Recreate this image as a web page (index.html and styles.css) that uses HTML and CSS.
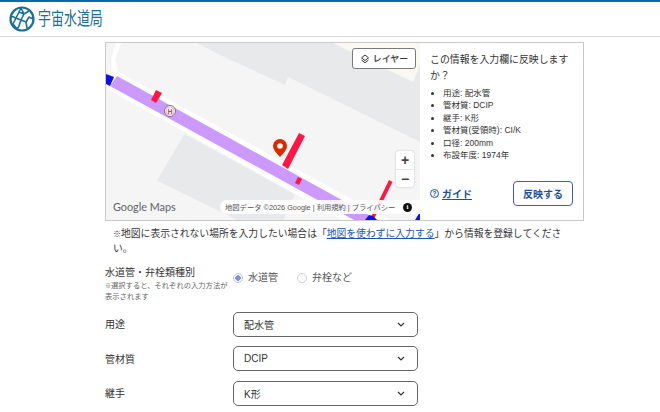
FILE: index.html
```html
<!DOCTYPE html>
<html lang="ja">
<head>
<meta charset="utf-8">
<title>宇宙水道局</title>
<link rel="stylesheet" href="styles.css">
</head>
<body>
<header class="header">
  <svg class="logo" width="26" height="26" viewBox="0 0 26 26" fill="none" stroke="#1b6e94" stroke-width="1.600" stroke-linejoin="round">
    <circle cx="13" cy="13" r="11.500" stroke-width="2.200"/>
    <path d="M2 10l5 2 3-6 2-4M7 12l-3 6 4 5M7 12l5 2-2 6-2 3M12 14l3-6 5-3M15 8l-3-6M12 14l5 2 1 6M17 16l3-5 4 2M10 6l5 2"/>
  </svg>
  <span class="brand">宇宙水道局</span>
</header>
<main class="content">
  <section class="panel">
    <div class="map">
      <svg class="map-art" width="314" height="177" viewBox="0 0 314 177">
        <rect width="314" height="177" fill="#f5f5f6"/>
        <path d="M91 0L114 12 179 42 182 34 314 99V0z" fill="#e8e9eb"/>
        <path d="M227 0L307 39 314 22V0z" fill="#f9f8f3"/>
        <path d="M79 93L187 152 176 177H135L53 137z" fill="#e8e9eb" stroke="#e8e9eb" stroke-width="3" stroke-linejoin="round"/>
        <path d="M10 0Q3 14 7 30L13 33 9 17 15 0z" fill="#fff"/>
        <path d="M9 27L284 177H236L3 47z" fill="#fff"/>
        <path d="M11 33L272 177H248L4 43z" fill="#cc99ff"/>
        <path d="M0 31l8 3-4 9-4-2z" fill="#1010e0"/>
        <path d="M50 47l6 3-6 10-5-3z" fill="#ff1744"/>
        <circle cx="64" cy="68" r="5.500" fill="#fff" stroke="#777"/>
        <circle cx="64" cy="68" r="4" fill="#fff" stroke="#e8a0bd" stroke-width=".8"/>
        <text x="64" y="70.500" class="h-mark">H</text>
        <path d="M176 122l17-32 6 3-17 33z" fill="#ff1744"/>
        <path d="M189 140l3-6 4 2-3 6z" fill="#ff1744"/>
        <path d="M283 137l3.500 2-19 38h-4z" fill="#ff1744"/>
        <path d="M259 177l4-5 4 1 4 4z" fill="#1010e0"/>
        <path d="M309 177l5-8v8z" fill="#1010e0"/>
        <path d="M174 114c-4-4-7-8-7-11a7 7 0 0 1 14 0c0 3-3 7-7 11z" fill="#d92a00"/>
        <circle cx="174" cy="103" r="2.800" fill="#fff"/>
      </svg>
      <button class="layer-btn" type="button">
        <svg width="10" height="10" viewBox="0 0 10 10" fill="none" stroke="#333" stroke-width="1"><path d="M5 1l3.500 2.800L5 6.500 1.500 3.800z"/><path d="M1.500 6L5 8.800 8.500 6"/></svg>
        レイヤー
      </button>
      <div class="zoom-ctl"><span class="zoom-btn">+</span><span class="zoom-btn zoom-minus">−</span></div>
      <div class="google">Google Maps</div>
      <div class="attrib"><span class="attrib-text">地図データ ©2026 Google | 利用規約 | プライバシー</span><span class="info">i</span></div>
    </div>
    <aside class="side">
      <p class="question">この情報を入力欄に反映しますか？</p>
      <ul class="spec">
        <li>用途: 配水管</li>
        <li>管材質: DCIP</li>
        <li>継手: K形</li>
        <li>管材質(受領時): CI/K</li>
        <li>口径: 200mm</li>
        <li>布設年度: 1974年</li>
      </ul>
      <div class="side-actions">
        <a class="guide" href="#"><span class="q-icon">?</span><span class="guide-text">ガイド</span></a>
        <button class="apply" type="button">反映する</button>
      </div>
    </aside>
  </section>
  <p class="note"><span class="note-mark">※</span>地図に表示されない場所を入力したい場合は「<a href="#">地図を使わずに入力する</a>」から情報を登録してください。</p>
  <form class="form">
    <div class="row row-type">
      <div class="label-box">
        <div class="label">水道管・弁栓類種別</div>
        <div class="hint"><span class="hint-mark">※</span>選択すると、それぞれの入力方法が表示されます</div>
      </div>
      <div class="radios">
        <span class="radio radio-on"><i class="dot"></i>水道管</span>
        <span class="radio"><i class="dot"></i>弁栓など</span>
      </div>
    </div>
    <div class="row"><div class="label-box"><div class="label">用途</div></div><div class="select"><span>配水管</span><svg width="8" height="5" viewBox="0 0 8 5" fill="none" stroke="#333" stroke-width="1.200"><path d="M1 1l3 3 3-3"/></svg></div></div>
    <div class="row"><div class="label-box"><div class="label">管材質</div></div><div class="select"><span>DCIP</span><svg width="8" height="5" viewBox="0 0 8 5" fill="none" stroke="#333" stroke-width="1.200"><path d="M1 1l3 3 3-3"/></svg></div></div>
    <div class="row"><div class="label-box"><div class="label">継手</div></div><div class="select"><span>K形</span><svg width="8" height="5" viewBox="0 0 8 5" fill="none" stroke="#333" stroke-width="1.200"><path d="M1 1l3 3 3-3"/></svg></div></div>
  </form>
</main>
</body>
</html>
```
FILE: styles.css
```css
* { box-sizing: border-box; }
html, body { margin: 0; padding: 0; }
body {
  background: #fff;
  color: #333;
  font-family: "Liberation Sans", "Noto Sans CJK JP", sans-serif;
  height: 412px;
  overflow: hidden;
}
.header {
  height: 37px;
  border-top: 2px solid #0a68ad;
  border-bottom: 1px solid #dcdcdc;
  padding-left: 9px;
  display: flex;
  align-items: center;
  gap: 3px;
}
.brand {
  font-size: 18px;
  color: #1b6e94;
  transform: scaleX(.72);
  transform-origin: left;
  line-height: 1;
}
.content { width: 479px; margin: 5px 0 0 105px; }
.panel {
  display: flex;
  height: 179px;
  border: 1px solid #c9c9c9;
}
.map { position: relative; width: 314px; height: 177px; overflow: hidden; flex: none; }
.map-art { display: block; }
.h-mark { font: bold 7px "Liberation Sans", sans-serif; fill: #e0356f; text-anchor: middle; }
.layer-btn {
  position: absolute;
  left: 246px;
  top: 5px;
  width: 64px;
  height: 21px;
  padding: 0;
  border: 1px solid #7a7a7a;
  border-radius: 3px;
  background: #fff;
  color: #333;
  font: 500 9px "Noto Sans CJK JP", sans-serif;
  display: flex;
  align-items: center;
  justify-content: center;
  gap: 3px;
}
.zoom-ctl {
  position: absolute;
  left: 290px;
  top: 108px;
  width: 18px;
  background: #fff;
  border-radius: 3px;
  box-shadow: 0 0 2px rgba(0, 0, 0, .25);
  display: flex;
  flex-direction: column;
}
.zoom-btn {
  height: 18px;
  text-align: center;
  font: bold 14px/18px "Liberation Sans", sans-serif;
  color: #444;
}
.zoom-minus { border-top: 1px solid #e6e6e6; }
.google {
  position: absolute;
  left: 7px;
  top: 157px;
  font: 400 10.800px/14px Lato, sans-serif;
  color: #5f6368;
}
.attrib {
  position: absolute;
  left: 114px;
  top: 157px;
  width: 200px;
  height: 14px;
  background: rgba(255, 255, 255, .9);
  border-radius: 7px 0 0 7px;
  display: flex;
  align-items: center;
  padding-left: 5px;
}
.attrib-text { font-size: 7.300px; color: #555; white-space: nowrap; }
.info {
  position: absolute;
  right: 8px;
  top: 2.500px;
  width: 9px;
  height: 9px;
  border-radius: 50%;
  background: #111;
  color: #fff;
  font: bold 7px/9px "Liberation Serif", serif;
  text-align: center;
}
.side { flex: 1; display: flex; flex-direction: column; padding: 9px 10px 14px 10px; background: #fff; }
.question { margin: 0; font-size: 9.900px; line-height: 16px; }
.spec { margin: 3px 0 0; padding: 0 0 0 13px; font-size: 8.500px; line-height: 12.400px; }
.side-actions { margin-top: auto; display: flex; justify-content: space-between; align-items: center; }
.guide { display: flex; align-items: center; gap: 3px; color: #1d4f9c; text-decoration: none; font-size: 10px; font-weight: 700; }
.guide-text { text-decoration: underline; }
.q-icon {
  width: 9px;
  height: 9px;
  border: 1px solid #1d4f9c;
  border-radius: 50%;
  font: bold 7px/7px "Liberation Sans", sans-serif;
  text-align: center;
}
.apply {
  width: 60px;
  height: 25px;
  padding: 0;
  background: #fff;
  border: 1px solid #3f5fa8;
  border-radius: 4px;
  color: #1d4f9c;
  font: 700 10px "Liberation Sans", "Noto Sans CJK JP", sans-serif;
}
.note { margin: 5px 0 0 8px; width: 453px; font-size: 9.800px; line-height: 15px; color: #333; }
.note-mark { font-size: 8px; line-height: 1; }
.note a { color: #1a55b5; }
.form { margin-top: 8px; display: flex; flex-direction: column; gap: 9.500px; }
.row { display: flex; align-items: center; }
.row-type { align-items: flex-start; }
.label-box { width: 128px; flex: none; padding-top: 1px; }
.label { font-size: 10px; line-height: 15px; color: #333; }
.hint { font-size: 7.300px; line-height: 11px; color: #666; width: 126px; }
.hint-mark { font-size: 6px; line-height: 1; }
.radios { display: flex; gap: 19px; padding-top: 6px; }
.radio { display: flex; align-items: center; gap: 5px; font-size: 10px; line-height: 15px; color: #555; }
.dot { width: 10px; height: 10px; border: 1px solid #ccc; border-radius: 50%; background: #fff; }
.radio-on .dot { border-color: #b9c4ea; background: radial-gradient(circle, #7f8fdc 0 2.500px, #fff 3px); }
.select {
  width: 185px;
  height: 25px;
  border: 1px solid #666;
  border-radius: 5px;
  display: flex;
  align-items: center;
  justify-content: space-between;
  padding: 0 12px 0 10px;
  font-size: 10px;
  color: #333;
}
```
